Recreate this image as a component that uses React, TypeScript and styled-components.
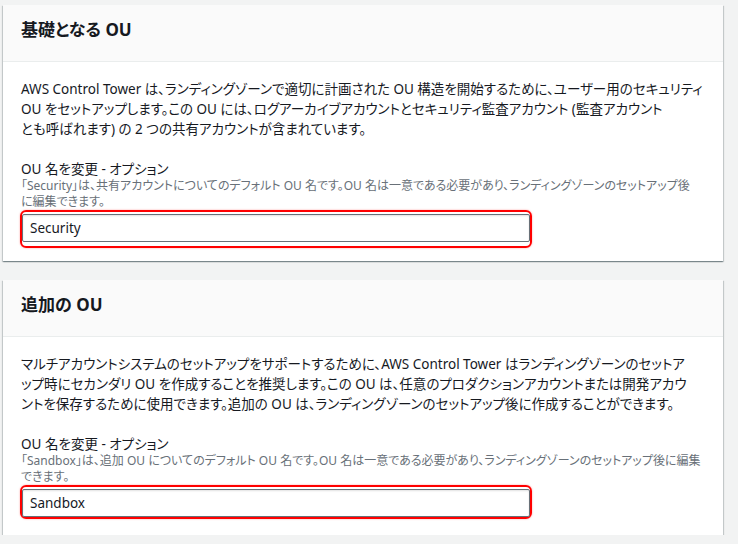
import React from 'react';
import styled, { createGlobalStyle } from 'styled-components';

const GlobalStyle = createGlobalStyle`
  body {
    margin: 0;
    background: #f2f3f3;
    font-family: "Noto Sans", "Noto Sans CJK JP", sans-serif;
    color: #16191f;
  }
`;

type OuSection = {
  title: string;
  lines: string[];
  hint: string[];
  value: string;
  mark: MarkProps;
};

type MarkProps = {
  $top: number;
  $padTop: number;
  $padBottom: number;
  $after: number;
};

const sections: OuSection[] = [
  {
    title: '基礎となる OU',
    lines: [
      'AWS Control Tower は、ランディングゾーンで適切に計画された OU 構造を開始するために、ユーザー用のセキュリティ',
      'OU をセットアップします。この OU には、ログアーカイブアカウントとセキュリティ監査アカウント (監査アカウント',
      'とも呼ばれます) の 2 つの共有アカウントが含まれています。',
    ],
    hint: [
      '「Security」は、共有アカウントについてのデフォルト OU 名です。OU 名は一意である必要があり、ランディングゾーンのセットアップ後',
      'に編集できます。',
    ],
    value: 'Security',
    mark: { $top: 0, $padTop: 2, $padBottom: 4, $after: 0 },
  },
  {
    title: '追加の OU',
    lines: [
      'マルチアカウントシステムのセットアップをサポートするために、AWS Control Tower はランディングゾーンのセットア',
      'ップ時にセカンダリ OU を作成することを推奨します。この OU は、任意のプロダクションアカウントまたは開発アカウ',
      'ントを保存するために使用できます。追加の OU は、ランディングゾーンのセットアップ後に作成することができます。',
    ],
    hint: [
      '「Sandbox」は、追加 OU についてのデフォルト OU 名です。OU 名は一意である必要があり、ランディングゾーンのセットアップ後に編集',
      'できます。',
    ],
    value: 'Sandbox',
    mark: { $top: 0, $padTop: 2, $padBottom: 0, $after: 3 },
  },
];

const App = () => {
  return (
    <Page>
      <GlobalStyle />
      {sections.map((s) => (
        <Card key={s.value}>
          <Header>
            <Title>{s.title}</Title>
          </Header>
          <Body>
            <Paragraph>
              {s.lines.map((l, i) => (
                <Line key={i}>{l}</Line>
              ))}
            </Paragraph>
            <Field>
              <Label>OU 名を変更 - オプション</Label>
              <Hint>
                {s.hint.map((l, i) => (
                  <Line key={i}>{l}</Line>
                ))}
              </Hint>
              <Mark {...s.mark}>
                <Input defaultValue={s.value} />
              </Mark>
            </Field>
          </Body>
        </Card>
      ))}
    </Page>
  );
};

export default App;

const Page = styled.div`
  display: flex;
  flex-direction: column;
  gap: 19px;
  padding: 5px 15px 0 3px;
`;

const Card = styled.section`
  background: #fff;
  box-shadow: 0 1px 1px 0 rgba(0, 28, 36, 0.3), 1px 1px 1px 0 rgba(0, 28, 36, 0.15),
    -1px 1px 1px 0 rgba(0, 28, 36, 0.15);
`;

const Header = styled.div`
  background: #fafafa;
  border-bottom: 1px solid #eaeded;
  padding: 14px 18px 20px;
`;

const Title = styled.h2`
  margin: 0;
  font-size: 17px;
  line-height: 22px;
  font-weight: 700;
  font-feature-settings: 'palt';
`;

const Body = styled.div`
  padding: 17px 18px 13px;
`;

const Paragraph = styled.p`
  margin: 0;
  font-size: 13.5px;
  line-height: 20px;
  font-feature-settings: 'palt';
`;

const Line = styled.span`
  display: block;
  white-space: nowrap;
`;

const Field = styled.div`
  display: flex;
  flex-direction: column;
  margin-top: 21px;
`;

const Label = styled.div`
  font-size: 13.5px;
  line-height: 18px;
  font-feature-settings: 'palt';
`;

const Hint = styled.div`
  font-size: 12px;
  line-height: 16px;
  color: #687078;
  font-feature-settings: 'palt';
`;

const Mark = styled.div<MarkProps>`
  align-self: flex-start;
  margin: ${(p) => p.$top}px 0 ${(p) => p.$after}px -1px;
  padding: ${(p) => p.$padTop}px 0 ${(p) => p.$padBottom}px;
  border: 2px solid #ff0000;
  border-radius: 6px;
  box-shadow: 0 0 2px rgba(255, 0, 0, 0.4);
`;

const Input = styled.input`
  display: block;
  box-sizing: border-box;
  width: 508px;
  height: 28px;
  margin: 0;
  padding: 0 7px;
  border: 1px solid #687078;
  border-radius: 2px;
  box-shadow: inset 0 1px 2px rgba(0, 0, 0, 0.12);
  font-family: "Noto Sans", "Noto Sans CJK JP", sans-serif;
  font-size: 13.5px;
  color: #16191f;
  outline: none;
`;
